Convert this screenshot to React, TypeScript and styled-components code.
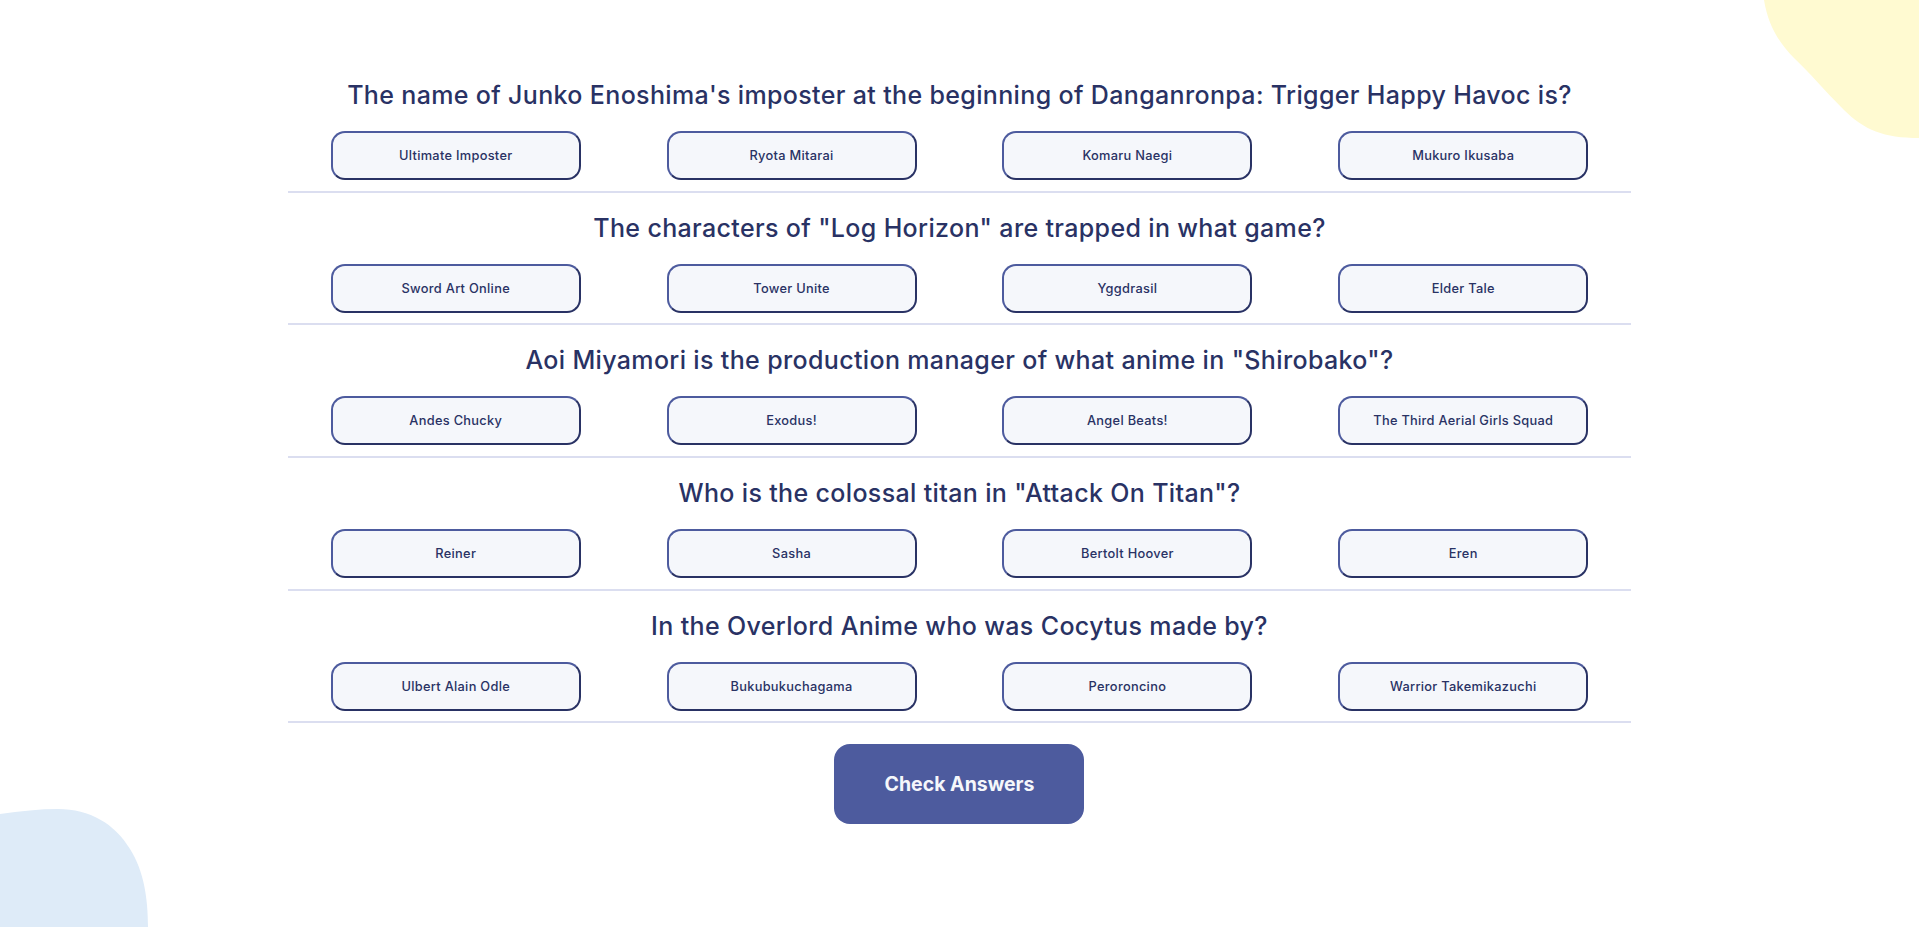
import React from "react";
import styled, { createGlobalStyle } from "styled-components";

const GlobalStyle = createGlobalStyle`
  html, body {
    margin: 0;
    padding: 0;
    background: #ffffff;
  }
  body {
    font-family: "Inter", "Noto Sans", sans-serif;
  }
  * { box-sizing: border-box; }
`;

const Page = styled.div`
  position: relative;
  min-height: 927px;
  overflow: hidden;
  background: #ffffff;
`;

const BlobTopRight = styled.svg`
  position: absolute;
  top: 0;
  right: 0;
  width: 155px;
  height: 140px;
  pointer-events: none;
`;

const BlobBottomLeft = styled.svg`
  position: absolute;
  left: 0;
  bottom: 0;
  width: 150px;
  height: 118px;
  pointer-events: none;
`;

const Quiz = styled.main`
  position: relative;
  width: 70%;
  margin: 0 auto;
  padding-top: 60px;
`;

const QuestionBlock = styled.section`
  padding: 20px 0 10.67px;
  border-bottom: 2px solid #dbdef0;
`;

const QuestionTitle = styled.h2`
  margin: 0;
  text-align: center;
  font-family: "Inter", "Noto Sans", sans-serif;
  font-size: 25px;
  line-height: 30px;
  font-weight: 500;
  color: #293264;
  letter-spacing: 0.35px;
`;

const AnswerGrid = styled.div`
  display: grid;
  grid-template-columns: repeat(4, 1fr);
  justify-items: center;
  margin-top: 21px;
`;

const AnswerButton = styled.button`
  width: 250px;
  height: 49px;
  border-radius: 14px;
  border: 2px solid;
  border-color: #4d5b9e #293264 #293264 #4d5b9e;
  background: #f5f7fb;
  color: #293264;
  font-family: "Inter", "Noto Sans", sans-serif;
  font-size: 12.8px;
  font-weight: 500;
  letter-spacing: 0.3px;
  cursor: pointer;
`;

const CheckButton = styled.button`
  display: block;
  margin: 20.6px auto 0;
  width: 250px;
  height: 80px;
  border: none;
  border-radius: 16px;
  background: #4d5b9e;
  color: #f5f7fb;
  font-family: "Inter", "Roboto", sans-serif;
  font-size: 19.5px;
  font-weight: 700;
  cursor: pointer;
`;

const questions = [
  {
    q: "The name of Junko Enoshima's imposter at the beginning of Danganronpa: Trigger Happy Havoc is?",
    a: ["Ultimate Imposter", "Ryota Mitarai", "Komaru Naegi", "Mukuro Ikusaba"],
  },
  {
    q: 'The characters of "Log Horizon" are trapped in what game?',
    a: ["Sword Art Online", "Tower Unite", "Yggdrasil", "Elder Tale"],
  },
  {
    q: 'Aoi Miyamori is the production manager of what anime in "Shirobako"?',
    a: ["Andes Chucky", "Exodus!", "Angel Beats!", "The Third Aerial Girls Squad"],
  },
  {
    q: 'Who is the colossal titan in "Attack On Titan"?',
    a: ["Reiner", "Sasha", "Bertolt Hoover", "Eren"],
  },
  {
    q: "In the Overlord Anime who was Cocytus made by?",
    a: ["Ulbert Alain Odle", "Bukubukuchagama", "Peroroncino", "Warrior Takemikazuchi"],
  },
];

export default function App() {
  return (
    <Page>
      <GlobalStyle />
      <BlobTopRight viewBox="0 0 155 140" aria-hidden>
        <path
          d="M0 0 H155 V138 C120 138 100 130 80 110 C60 90 45 72 30 58 C14 42 4 24 0 0 Z"
          fill="#FFFAD1"
        />
      </BlobTopRight>
      <BlobBottomLeft viewBox="0 0 150 118" aria-hidden>
        <path
          d="M0 5 C20 2 40 0 58 0 C90 0 115 15 130 40 C144 62 148 90 148 118 H0 Z"
          fill="#DEEBF8"
        />
      </BlobBottomLeft>
      <Quiz>
        {questions.map((item) => (
          <QuestionBlock key={item.q}>
            <QuestionTitle>{item.q}</QuestionTitle>
            <AnswerGrid>
              {item.a.map((ans) => (
                <AnswerButton key={ans}>{ans}</AnswerButton>
              ))}
            </AnswerGrid>
          </QuestionBlock>
        ))}
        <CheckButton>Check Answers</CheckButton>
      </Quiz>
    </Page>
  );
}
